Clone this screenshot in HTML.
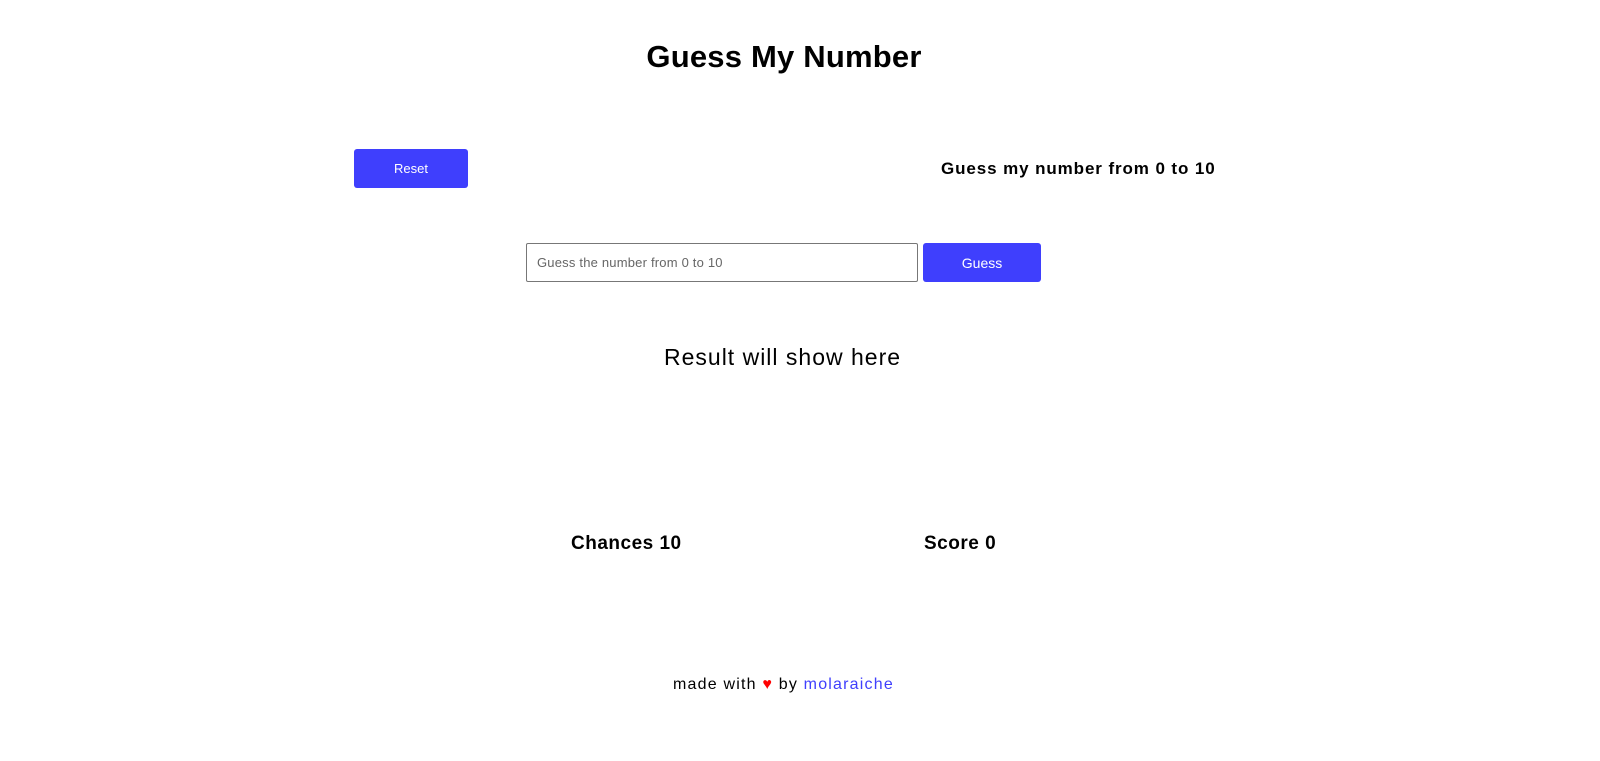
<!DOCTYPE html>
<html><head><style>
body{margin:0;width:1600px;height:761px;background:#fff;font-family:"Liberation Sans",sans-serif;position:relative;color:#000}
.a{position:absolute;white-space:nowrap}
.btn{position:absolute;background:#3f3ffd;color:#fff;border-radius:3px;font-size:13px;display:flex;align-items:center;justify-content:center}
</style></head><body>
<div class="a" style="left:0;width:1568px;text-align:center;top:39px;font-size:31px;font-weight:bold;letter-spacing:0.2px">Guess My Number</div>
<div class="btn" style="left:354px;top:149px;width:114px;height:39px">Reset</div>
<div class="a" style="left:941px;top:159px;font-size:17px;font-weight:bold;letter-spacing:0.9px">Guess my number from 0 to 10</div>
<div class="a" style="left:526px;top:243px;width:390px;height:37px;border:1px solid #777;border-radius:2px;box-sizing:content-box"></div>
<div class="a" style="left:537px;top:255px;font-size:13px;color:#666;letter-spacing:0.2px">Guess the number from 0 to 10</div>
<div class="btn" style="left:923px;top:243px;width:118px;height:39px;font-size:14px">Guess</div>
<div class="a" style="left:664px;top:344px;font-size:23px;letter-spacing:1px">Result will show here</div>
<div class="a" style="left:571px;top:533px;font-size:19px;font-weight:bold;letter-spacing:0.5px">Chances 10</div>
<div class="a" style="left:924px;top:533px;font-size:19px;font-weight:bold;letter-spacing:0.5px">Score 0</div>
<div class="a" style="left:673px;top:676px;font-size:16px;letter-spacing:1.2px">made with <span style="color:red">♥</span> by <span style="color:#3f3ffd">molaraiche</span></div>
</body></html>
